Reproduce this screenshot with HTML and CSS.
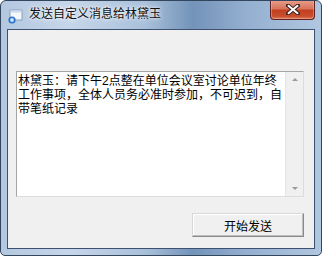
FILE: index.html
```html
<!DOCTYPE html>
<html>
<head>
<meta charset="utf-8">
<link rel="stylesheet" href="styles.css">
</head>
<body>
<div class="window">
  <div class="titlebar">
    <svg class="app-icon" width="16" height="16" viewBox="0 0 16 16">
      <rect x="3" y="2" width="12" height="10" fill="#f4f7fb" stroke="#8aa0bb" stroke-width="1"/>
      <rect x="3.5" y="2.5" width="11" height="2" fill="#c9d8ea"/>
      <circle cx="5" cy="12" r="3.6" fill="#2f6fc4"/>
      <circle cx="5" cy="12" r="2.2" fill="#8cc1f4"/>
      <path d="M3.6 12 L5.6 10.5 L5.6 13.5 Z" fill="#ffffff"/>
    </svg>
    <span class="title">发送自定义消息给林黛玉</span>
    <div class="close-btn">
      <svg width="14" height="11" viewBox="0 0 14 11">
        <path d="M2 1.5 L12 9.5 M12 1.5 L2 9.5" stroke="#3b2222" stroke-width="4" stroke-linecap="round"/>
        <path d="M2.5 1.8 L11.5 9.2 M11.5 1.8 L2.5 9.2" stroke="#ffffff" stroke-width="2" stroke-linecap="round"/>
      </svg>
    </div>
  </div>
  <div class="client">
    <div class="memo">
      <div class="memo-text"><span class="line">林黛玉：请下午2点整在单位会议室讨论单位年终</span><span class="line">工作事项，全体人员务必准时参加，不可迟到，自</span><span class="line">带笔纸记录</span></div>
      <div class="scrollbar">
        <span class="arrow up"></span>
        <span class="arrow down"></span>
      </div>
    </div>
    <div class="actions">
      <button class="send-btn">开始发送</button>
    </div>
  </div>
</div>
</body>
</html>
```

FILE: styles.css
```css
html, body {
  margin: 0;
  padding: 0;
  background: #ffffff;
}
.window {
  width: 322px;
  height: 256px;
  box-sizing: border-box;
  border: 1px solid #34465e;
  border-radius: 6px 6px 5px 5px;
  background: linear-gradient(90deg, #b3c8e0 0%, #c6d6ea 22%, #a9c0da 45%, #7393b9 60%, #93aecf 76%, #b1c7e0 100%);
  display: flex;
  flex-direction: column;
  overflow: hidden;
  font-family: "Noto Sans CJK SC", sans-serif;
}
.titlebar {
  height: 28px;
  display: flex;
  align-items: flex-start;
  position: relative;
}
.app-icon {
  margin: 7px 0 0 6px;
}
.title {
  margin: 4px 0 0 6px;
  font-size: 12px;
  line-height: 16px;
  color: #111;
  text-shadow: 0 0 6px rgba(255,255,255,0.9), 0 0 3px rgba(255,255,255,0.9);
}
.close-btn {
  position: absolute;
  right: 6px;
  top: -1px;
  width: 45px;
  height: 20px;
  box-sizing: border-box;
  border: 1px solid #5a2222;
  border-top: none;
  border-radius: 0 0 4px 4px;
  background: linear-gradient(180deg, #e8a08c 0%, #d8735c 45%, #c2401f 55%, #c84d2e 85%, #e07a5a 100%);
  display: flex;
  align-items: center;
  justify-content: center;
  box-shadow: inset 0 0 0 1px rgba(255,200,180,0.4);
}
.client {
  flex: 1;
  margin: 0 6px 6px 6px;
  border: 1px solid #3d5270;
  background: #f0f0f0;
  display: flex;
  flex-direction: column;
  padding: 41px 10px 0 8px;
}
.memo {
  height: 126px;
  box-sizing: border-box;
  border: 1px solid #a5a5a5;
  border-right-color: #dcdcdc;
  border-bottom-color: #dcdcdc;
  background: #ffffff;
  display: flex;
}
.memo-text {
  flex: 1;
  padding: 2px 0 0 1px;
  font-family: "Liberation Sans", "Noto Sans CJK SC", sans-serif;
  font-size: 12px;
  line-height: 14px;
  color: #000;
  display: flex;
  flex-direction: column;
  white-space: nowrap;
}
.scrollbar {
  width: 17px;
  background: #f0f0f0;
  border-left: 1px solid #e6e6e6;
  display: flex;
  flex-direction: column;
  justify-content: space-between;
  align-items: center;
  padding: 6px 0 6px 0;
}
.arrow {
  width: 0;
  height: 0;
  border-left: 3px solid transparent;
  border-right: 3px solid transparent;
}
.arrow.up {
  border-bottom: 3px solid #9a9a9a;
}
.arrow.down {
  border-top: 3px solid #9a9a9a;
}
.actions {
  display: flex;
  justify-content: flex-end;
  margin-top: 16px;
}
.send-btn {
  width: 112px;
  height: 24px;
  box-sizing: border-box;
  border: 1px solid #8a8a8a;
  border-top-color: #d8d8d8;
  border-left-color: #d8d8d8;
  border-radius: 0;
  background: #f0f0f0;
  box-shadow: inset -1px -1px 0 #bfbfbf, inset 1px 1px 0 #ffffff;
  font-family: "Noto Sans CJK SC", sans-serif;
  font-size: 12px;
  color: #000;
  padding: 0;
}
```
